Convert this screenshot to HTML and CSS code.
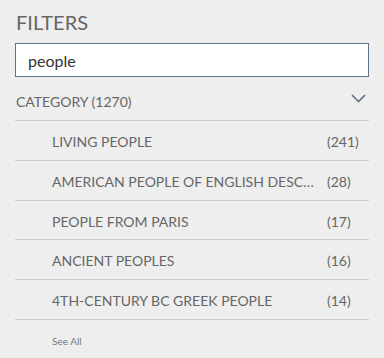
FILE: index.html
```html
<!DOCTYPE html>
<html lang="en">
<head>
<meta charset="utf-8">
<title>Filters</title>
<link rel="stylesheet" href="styles.css">
</head>
<body>
<div class="panel">
  <h2 class="title">FILTERS</h2>
  <input class="search" type="text" value="people">
  <div class="cat-head">
    <span class="cat-label">CATEGORY (1270)</span>
    <svg class="chevron" width="15" height="9" viewBox="0 0 15 9"><polyline points="1,1 7.5,7.5 14,1" fill="none" stroke="#5e7189" stroke-width="1.6"/></svg>
  </div>
  <ul class="list">
    <li class="row"><span class="label">LIVING PEOPLE</span><span class="count">(241)</span></li>
    <li class="row"><span class="label">AMERICAN PEOPLE OF ENGLISH DESCENT</span><span class="count">(28)</span></li>
    <li class="row"><span class="label">PEOPLE FROM PARIS</span><span class="count">(17)</span></li>
    <li class="row"><span class="label">ANCIENT PEOPLES</span><span class="count">(16)</span></li>
    <li class="row"><span class="label">4TH-CENTURY BC GREEK PEOPLE</span><span class="count">(14)</span></li>
  </ul>
  <a class="see-all" href="#">See All</a>
</div>
</body>
</html>
```

FILE: styles.css
```css
html, body {
  margin: 0;
  padding: 0;
  background: #eeeeee;
}
body {
  font-family: Lato, "Open Sans", sans-serif;
  color: #666666;
}
.panel {
  width: 354px;
  padding: 10px 15px 0 15px;
}
.title {
  margin: 0 0 9px 1px;
  font-size: 20px;
  font-weight: 400;
  line-height: 24px;
  color: #666666;
}
.search {
  display: block;
  box-sizing: border-box;
  width: 354px;
  height: 34px;
  margin: 0;
  padding: 0 12px;
  border: 1px solid #5e7189;
  background: #ffffff;
  font-family: Lato, sans-serif;
  font-size: 16px;
  color: #333333;
  outline: none;
}
.cat-head {
  display: flex;
  justify-content: space-between;
  align-items: flex-start;
  padding: 16px 0 10px 1px;
  border-bottom: 1px solid #cccccc;
}
.cat-label {
  font-size: 14px;
  line-height: 17px;
}
.chevron {
  display: block;
  margin: 1px 3px 0 0;
}
.list {
  list-style: none;
  margin: 0;
  padding: 0;
}
.row {
  display: grid;
  grid-template-columns: minmax(0, 1fr) 42px;
  column-gap: 13px;
  padding: 12px 0 9.8px 37px;
  border-bottom: 1px solid #cccccc;
  font-size: 14px;
  line-height: 17px;
}
.label {
  white-space: nowrap;
  overflow: hidden;
  text-overflow: ellipsis;
}
.count {
  white-space: nowrap;
}
.see-all {
  display: inline-block;
  margin: 15px 0 0 37px;
  font-size: 10px;
  line-height: 12px;
  color: #777777;
  text-decoration: none;
}
```
